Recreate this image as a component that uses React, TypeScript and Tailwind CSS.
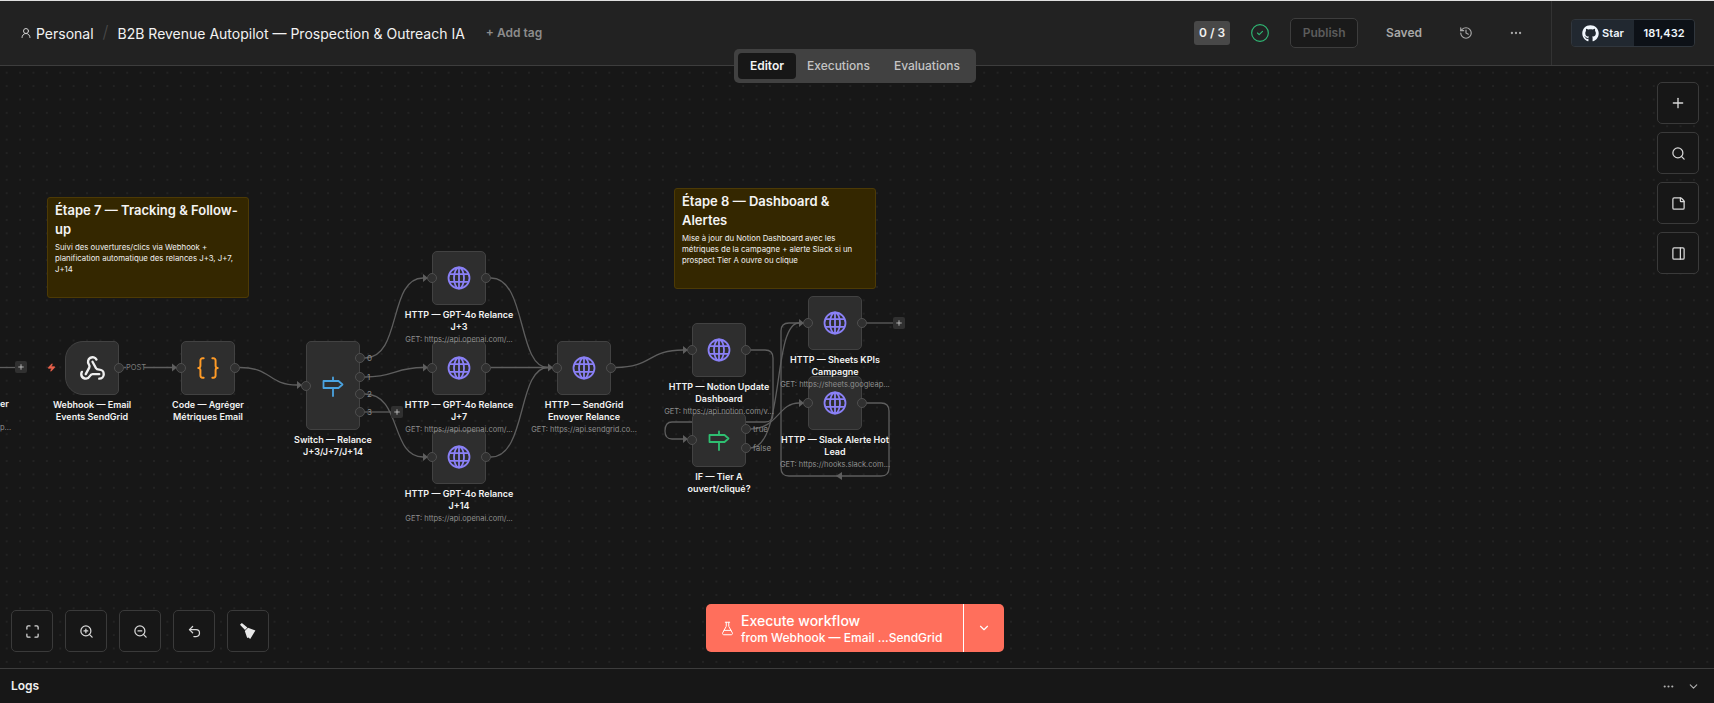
import type { ReactNode } from "react";
import {
  Braces,
  ChevronDown,
  CircleCheck,
  Ellipsis,
  FlaskConical,
  History,
  Maximize,
  PanelRight,
  Plus,
  Search,
  StickyNote,
  Undo2,
  UserRound,
  Webhook,
  ZoomIn,
  ZoomOut,
  Zap,
} from "lucide-react";
import { FaGithub } from "react-icons/fa";

function GlobeIcon() {
  return (
    <svg width="24" height="24" viewBox="0 0 24 24" fill="none" stroke="#8a80f6" strokeWidth="1.8">
      <circle cx="12" cy="12" r="10.5" />
      <ellipse cx="12" cy="12" rx="5" ry="10.5" />
      <path d="M2.5 8.2H21.5M2.5 15.8H21.5M12 1.5V22.5" />
    </svg>
  );
}

function SignIcon({ color }: { color: string }) {
  return (
    <svg width="22" height="22" viewBox="0 0 22 22" fill="none" stroke={color} strokeWidth="1.8" strokeLinejoin="round">
      <path d="M1.5 6H16.5L20.5 9.5L16.5 13H1.5Z" />
      <path d="M11 2.5V6M11 13V21" strokeLinecap="round" />
    </svg>
  );
}

function BroomIcon() {
  return (
    <svg width="16" height="16" viewBox="0 0 16 16" fill="#e8e8e8">
      <path d="M0 1.8L1.8 0L7.4 4.6L5 7Z" />
      <path d="M4.8 8L8 4.8L15.4 7.6L10.2 16L8.4 14.4L7.2 15Z" />
    </svg>
  );
}

function Handle({ className, text }: { className: string; text?: string }) {
  return (
    <>
      <span className={`absolute size-[10px] -translate-x-1/2 -translate-y-1/2 rounded-full border border-[#4f4f4f] bg-[#303030] ${className}`} />
      {text && (
        <span className={`absolute ml-[7px] -translate-y-1/2 text-[8px] leading-[10px] text-[#8a8a8a] ${className}`}>
          {text}
        </span>
      )}
    </>
  );
}

function AddButton({ className }: { className: string }) {
  return (
    <div className={`absolute flex size-[12px] items-center justify-center rounded-[2px] bg-[#303030] text-[#c8c8c8] ${className}`}>
      <Plus size={8} strokeWidth={2.5} />
    </div>
  );
}

type NodeProps = {
  className: string;
  icon: ReactNode;
  label: string;
  sub?: string;
  outs?: { className: string; text?: string }[];
  hasIn?: boolean;
  shape?: string;
};

function FlowNode({ className, icon, label, sub, outs, hasIn = true, shape = "rounded-[5px]" }: NodeProps) {
  return (
    <div className={`absolute w-[54px] ${className}`}>
      <div className={`flex h-full items-center justify-center border border-[#424242] bg-[#2e2e2e] ${shape}`}>
        {icon}
      </div>
      {hasIn && <Handle className="left-0 top-1/2" />}
      {(outs ?? [{ className: "left-full top-1/2" }]).map((o) => (
        <Handle key={o.className} className={o.className} text={o.text} />
      ))}
      <div className="absolute left-1/2 top-full z-10 mt-[4px] -translate-x-1/2 text-center">
        <div className="whitespace-pre text-[9px] font-semibold leading-[11.5px] text-[#f2f2f2]">{label}</div>
        {sub && <div className="mt-[2.5px] whitespace-nowrap text-[7.5px] leading-[10px] text-[#8f8f8f]">{sub}</div>}
      </div>
    </div>
  );
}

function Note({ className, title, body }: { className: string; title: string; body: string }) {
  return (
    <div className={`absolute h-[101px] w-[202px] rounded-[3px] border border-[#4d3a05] bg-[#342700] px-[7px] pt-[3px] ${className}`}>
      <div className="whitespace-pre text-[13px] font-semibold leading-[18.5px] text-[#f4f4f4]">{title}</div>
      <div className="mt-[4px] whitespace-pre text-[7.8px] leading-[10.8px] text-[#f0f0f0]">{body}</div>
    </div>
  );
}

function CanvasButton({ children }: { children: ReactNode }) {
  return (
    <button className="flex size-[42px] items-center justify-center rounded-[5px] border border-[#3a3a3a] bg-[#171717] text-[#d8d8d8]">
      {children}
    </button>
  );
}

const EDGES = [
  "M124 367.5H126M144 367.5H172",
  "M240 367.5C272 367.5 268 385 297 385",
  "M365 358C402 358 388 278 423 278",
  "M365 377C395 377 395 367.5 423 367.5",
  "M365 394C402 394 390 457 423 457",
  "M365 412H391",
  "M491 278C527 278 517 367.5 548 367.5",
  "M491 367.5H548",
  "M491 457C527 457 517 367.5 548 367.5",
  "M616 367.5C652 367.5 648 350 683 350",
  "M751 350H765Q773 350 773 358V414Q773 422 765 422H672Q665 422 665 431Q665 439 672 439H683",
  "M750 429C778 429 778 403 799 403",
  "M750 448C785 448 772 323 799 323",
  "M867 403H881Q889 403 889 411V468Q889 476 881 476H789Q781 476 781 468V331Q781 323 789 323H799",
  "M867 323H893",
  "M0 367.5H15",
];

const ARROWS = [
  "172,363.5 177,367.5 172,371.5",
  "297,381 302,385 297,389",
  "423,274 428,278 423,282",
  "423,363.5 428,367.5 423,371.5",
  "423,453 428,457 423,461",
  "548,363.5 553,367.5 548,371.5",
  "683,346 688,350 683,354",
  "683,435 688,439 683,443",
  "799,319 804,323 799,327",
  "799,399 804,403 799,407",
  "842,472 836,476 842,480",
];

export default function App() {
  return (
    <div className="relative flex h-[703px] w-full flex-col overflow-hidden bg-[#171717] font-['Inter',sans-serif]">
      {/* Header */}
      <header className="flex h-[66px] shrink-0 items-center border-b border-t border-b-[#3d3d3d] border-t-[#e0e0e0] bg-[#222222]">
        <div className="flex flex-1 items-center pl-[20px]">
          <UserRound size={12} className="text-[#d0d0d0]" />
          <span className="ml-[4px] text-[14px] text-[#f2f2f2]">Personal</span>
          <span className="mx-[9px] text-[17px] font-light text-[#4a4a4a]">/</span>
          <span className="text-[14px] text-[#f2f2f2]">B2B Revenue Autopilot — Prospection &amp; Outreach IA</span>
          <span className="ml-[21px] text-[12px] font-semibold text-[#8c8c8c]">+ Add tag</span>
        </div>
        <div className="flex items-center">
          <span className="flex h-[24px] w-[36px] items-center justify-center rounded-[3px] bg-[#484848] text-[12px] font-semibold text-[#f0f0f0]">
            0 / 3
          </span>
          <CircleCheck size={20} strokeWidth={1.4} className="ml-[20px] text-[#2fb673]" />
          <button className="ml-[20px] h-[30px] w-[68px] rounded-[5px] border border-[#3d3d3d] bg-[#1a1a1a] text-[12px] font-semibold text-[#5c5c5c]">
            Publish
          </button>
          <span className="ml-[28px] text-[12px] font-semibold text-[#a8a8a8]">Saved</span>
          <History size={14} className="ml-[37px] text-[#a8a8a8]" />
          <Ellipsis size={14} className="ml-[36px] text-[#a8a8a8]" />
        </div>
        <div className="ml-[28px] flex h-[64px] items-center border-l border-[#333333] pl-[19px] pr-[19px]">
          <div className="flex h-[28px] w-[124px] overflow-hidden rounded-[4px] border border-[#30363d] font-semibold text-[#f0f6fc]">
            <div className="flex w-[62px] items-center justify-center gap-[3px] bg-[#212830] text-[11px]">
              <FaGithub size={17} />
              Star
            </div>
            <div className="flex flex-1 items-center justify-center bg-[#0d1117] text-[11px]">181,432</div>
          </div>
        </div>
      </header>

      {/* Tabs sit across the header border */}
      <div className="absolute left-[734px] top-[49px] z-20 flex h-[34px] w-[242px] items-center rounded-[5px] bg-[#414141] px-[4px] text-[12px] font-medium text-[#c4c4c4]">
        <span className="flex h-[26px] w-[58px] items-center justify-center rounded-[4px] bg-[#171717] font-semibold text-[#f2f2f2]">Editor</span>
        <span className="ml-[11px]">Executions</span>
        <span className="ml-[24px]">Evaluations</span>
      </div>

      {/* Canvas */}
      <main className="relative flex-1 overflow-hidden bg-[radial-gradient(#232323_0.7px,transparent_0.7px)] bg-[size:13.4px_13.4px]">
        <div className="absolute left-0 top-[-66px] h-[703px] w-[1714px]">
          <svg className="absolute inset-0" width="1714" height="703" fill="none">
            {EDGES.map((d) => (
              <path key={d} d={d} stroke="#5e5e5e" strokeWidth="1.3" />
            ))}
            {ARROWS.map((p) => (
              <polygon key={p} points={p} fill="#5e5e5e" />
            ))}
          </svg>

          <div className="absolute left-0 top-[398px] whitespace-pre text-[9px] font-semibold leading-[11.5px] text-[#f2f2f2]">er</div>
          <div className="absolute left-0 top-[423px] text-[7.5px] leading-[10px] text-[#8f8f8f]">p...</div>
          <AddButton className="left-[15px] top-[361px]" />
          <Zap size={9} className="absolute left-[47px] top-[363px] fill-[#e8614c] text-[#e8614c]" />

          <Note
            className="left-[47px] top-[197px]"
            title={"Étape 7 — Tracking & Follow-\nup"}
            body={"Suivi des ouvertures/clics via Webhook +\nplanification automatique des relances J+3, J+7,\nJ+14"}
          />
          <Note
            className="left-[674px] top-[188px]"
            title={"Étape 8 — Dashboard &\nAlertes"}
            body={"Mise à jour du Notion Dashboard avec les\nmétriques de la campagne + alerte Slack si un\nprospect Tier A ouvre ou clique"}
          />

          <FlowNode
            className="left-[65px] top-[341px] h-[54px]"
            shape="rounded-l-[18px] rounded-r-[5px]"
            hasIn={false}
            icon={<Webhook size={27} strokeWidth={2.1} className="text-[#efefef]" />}
            label={"Webhook — Email\nEvents SendGrid"}
          />
          <span className="absolute left-[126px] top-[362.5px] text-[7.5px] leading-[10px] text-[#7c7c7c]">POST</span>
          <FlowNode
            className="left-[181px] top-[341px] h-[54px]"
            icon={<Braces size={26} strokeWidth={1.8} className="text-[#ff9b26]" />}
            label={"Code — Agréger\nMétriques Email"}
          />
          <FlowNode
            className="left-[306px] top-[341px] h-[89px]"
            icon={<SignIcon color="#4aa3e0" />}
            label={"Switch — Relance\nJ+3/J+7/J+14"}
            outs={[
              { className: "left-full top-[17px]", text: "0" },
              { className: "left-full top-[36px]", text: "1" },
              { className: "left-full top-[53px]", text: "2" },
              { className: "left-full top-[71px]", text: "3" },
            ]}
          />
          <AddButton className="left-[391px] top-[406px]" />
          <FlowNode
            className="left-[432px] top-[251px] h-[54px]"
            icon={<GlobeIcon />}
            label={"HTTP — GPT-4o Relance\nJ+3"}
            sub="GET: https://api.openai.com/..."
          />
          <FlowNode
            className="left-[432px] top-[341px] h-[54px]"
            icon={<GlobeIcon />}
            label={"HTTP — GPT-4o Relance\nJ+7"}
            sub="GET: https://api.openai.com/..."
          />
          <FlowNode
            className="left-[432px] top-[430px] h-[54px]"
            icon={<GlobeIcon />}
            label={"HTTP — GPT-4o Relance\nJ+14"}
            sub="GET: https://api.openai.com/..."
          />
          <FlowNode
            className="left-[557px] top-[341px] h-[54px]"
            icon={<GlobeIcon />}
            label={"HTTP — SendGrid\nEnvoyer Relance"}
            sub="GET: https://api.sendgrid.co..."
          />
          <FlowNode
            className="left-[692px] top-[323px] h-[54px]"
            icon={<GlobeIcon />}
            label={"HTTP — Notion Update\nDashboard"}
            sub="GET: https://api.notion.com/v..."
          />
          <FlowNode
            className="left-[692px] top-[413px] h-[54px]"
            icon={<SignIcon color="#2fbf71" />}
            label={"IF — Tier A\nouvert/cliqué?"}
            outs={[
              { className: "left-full top-[16px]", text: "true" },
              { className: "left-full top-[35px]", text: "false" },
            ]}
          />
          <FlowNode
            className="left-[808px] top-[296px] h-[54px]"
            icon={<GlobeIcon />}
            label={"HTTP — Sheets KPIs\nCampagne"}
            sub="GET: https://sheets.googleap..."
          />
          <AddButton className="left-[893px] top-[317px]" />
          <FlowNode
            className="left-[808px] top-[376px] h-[54px]"
            icon={<GlobeIcon />}
            label={"HTTP — Slack Alerte Hot\nLead"}
            sub="GET: https://hooks.slack.com..."
          />
        </div>

        {/* Right toolbar */}
        <div className="absolute right-[15px] top-[16px] flex flex-col gap-[8px]">
          <CanvasButton><Plus size={16} /></CanvasButton>
          <CanvasButton><Search size={15} /></CanvasButton>
          <CanvasButton><StickyNote size={15} /></CanvasButton>
          <CanvasButton><PanelRight size={15} /></CanvasButton>
        </div>

        {/* Bottom left toolbar */}
        <div className="absolute bottom-[16px] left-[11px] flex gap-[12px]">
          <CanvasButton><Maximize size={15} /></CanvasButton>
          <CanvasButton><ZoomIn size={15} /></CanvasButton>
          <CanvasButton><ZoomOut size={15} /></CanvasButton>
          <CanvasButton><Undo2 size={15} /></CanvasButton>
          <CanvasButton><BroomIcon /></CanvasButton>
        </div>

        {/* Execute */}
        <div className="absolute bottom-[16px] left-[706px] flex h-[48px] w-[298px] rounded-[5px] bg-[#ff6f5c] text-white">
          <div className="flex flex-1 items-center border-r border-white pl-[14px]">
            <FlaskConical size={15} strokeWidth={1.6} />
            <div className="ml-[6px]">
              <div className="text-[14px] font-medium leading-[18px]">Execute workflow</div>
              <div className="text-[12px] font-medium leading-[15px]">from Webhook — Email ...SendGrid</div>
            </div>
          </div>
          <div className="flex w-[40px] items-center justify-center">
            <ChevronDown size={14} />
          </div>
        </div>
      </main>

      {/* Logs */}
      <footer className="flex h-[35px] shrink-0 items-center justify-between border-t border-[#3d3d3d] bg-[#171717] pl-[11px] pr-[14px]">
        <span className="text-[12px] font-semibold text-[#f0f0f0]">Logs</span>
        <div className="flex items-center gap-[12px] text-[#b0b0b0]">
          <Ellipsis size={13} />
          <ChevronDown size={13} />
        </div>
      </footer>
    </div>
  );
}
